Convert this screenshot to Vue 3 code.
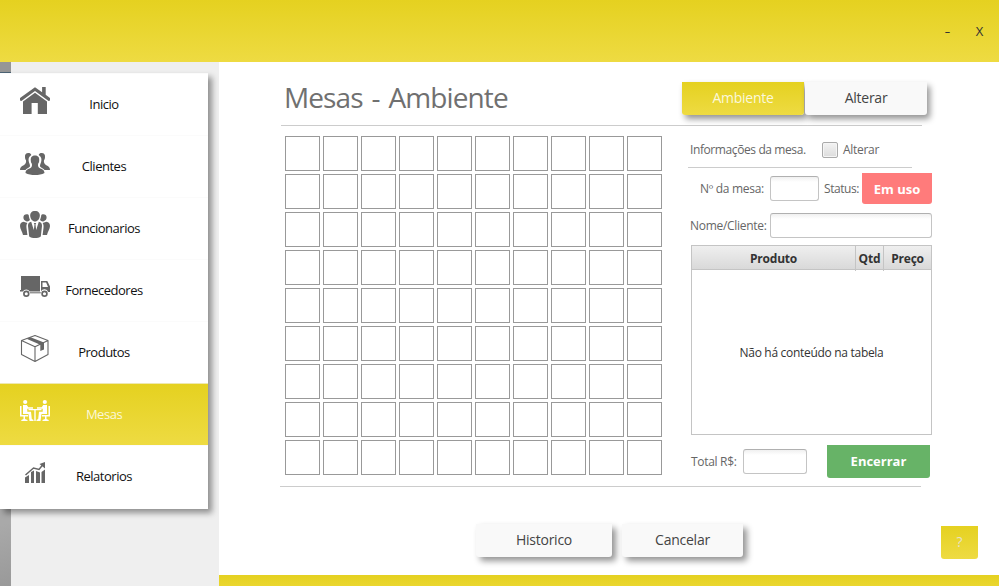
<script setup>
import { ref } from 'vue'

const active = ref('mesas')
const menu = [
  { id: 'inicio', label: 'Inicio' },
  { id: 'clientes', label: 'Clientes' },
  { id: 'funcionarios', label: 'Funcionarios' },
  { id: 'fornecedores', label: 'Fornecedores' },
  { id: 'produtos', label: 'Produtos' },
  { id: 'mesas', label: 'Mesas' },
  { id: 'relatorios', label: 'Relatorios' },
]
const tables = 90
</script>

<template>
  <div class="window">
    <header class="titlebar">
      <span class="win-btn minimize">-</span>
      <span class="win-btn close">X</span>
    </header>
    <div class="body">
      <aside class="sidebar">
        <div class="strip strip-top"></div>
        <nav class="menu">
          <a v-for="item in menu" :key="item.id" class="item" :class="{ active: active === item.id }" @click="active = item.id">
            <svg class="icon" viewBox="0 0 30 30" width="30" height="30">
              <g v-if="item.id === 'inicio'" fill="currentColor">
                <path d="M15 1.2 0 12v2.4l1.4.6L15 5l13.600 10 1.400-.6V12l-4.300-3.200V1h-3.600v5.200z" />
                <path d="M15 6.800 3 15.500V28h8.600V17h6.200v11H27V15.500z" />
              </g>
              <g v-else-if="item.id === 'clientes'" fill="currentColor">
                <path d="M8.500 5C5.600 5 4.800 6.800 5 9c.1 1.500.2 2.300 1 3.200.4 2-.3 3.800-2.300 5C1.500 18 0 19.500 0 22h5.500c1-1.500 3.300-2 4.300-3.200.7-1.300-.4-3-.9-4.800-.8-3-.3-5.200 2.400-7C10.800 5.600 9.800 5 8.500 5z" />
                <path d="M21.500 5c2.900 0 3.700 1.800 3.500 4-.1 1.500-.2 2.300-1 3.200-.4 2 .3 3.800 2.300 5 2.200.8 3.700 2.300 3.700 4.800h-5.500c-1-1.500-3.300-2-4.300-3.200-.7-1.300.4-3 .9-4.800.8-3 .3-5.200-2.400-7 .5-1.400 1.500-2 2.800-2z" />
                <path d="M15 7.500c-3.600 0-4.500 2.500-4.200 5 .1 1.500.2 2.400 1.100 3.300.3 2.100 0 3.300-1.400 4.300C8 21.200 5.600 22 5.500 25c5 2.700 14 2.700 19 0-.1-3-2.500-3.800-5-4.900-1.400-1-1.700-2.200-1.400-4.300.9-.9 1-1.800 1.100-3.300.3-2.500-.6-5-4.200-5z" />
              </g>
              <g v-else-if="item.id === 'funcionarios'" fill="currentColor">
                <path d="M15 1c3.400 0 5.100 2.100 4.800 5-.4 3.200-2.300 5.500-4.800 5.500S10.600 9.200 10.200 6C9.900 3.100 11.600 1 15 1z" />
                <path d="M6.700 4.200c1.400 0 1.600.2 2 .9.200 2.300.8 3.700 1.300 4.900-1 1.200-2.400 1.700-3.700 1.200-2-.7-3-2.300-2.900-4 .1-1.900 1.300-3 3.300-3z" />
                <path d="M23.300 4.200c-1.400 0-1.600.2-2 .9-.2 2.300-.8 3.700-1.300 4.900 1 1.200 2.400 1.700 3.700 1.200 2-.7 3-2.300 2.900-4-.1-1.900-1.300-3-3.300-3z" />
                <path d="M11.200 11.800 13.800 20l.7-5.600-.7-1.400h2.400l-.7 1.400.7 5.600 2.600-8.200c2.100.5 3.300 1.700 3.200 4.200l-1.200 10.500c-3 2-8.600 2-11.600 0L8 16c-.1-2.500 1.100-3.700 3.200-4.200z" />
                <path d="M3.500 11.800 7.400 13c-1 1.400-1.100 3-.9 5l.9 7H3c-.5-3.200-3-6-3-9 0-2.500 1.400-3.800 3.500-4.200z" />
                <path d="M26.500 11.800 22.600 13c1 1.400 1.100 3 .9 5l-.9 7H27c.5-3.200 3-6 3-9 0-2.500-1.400-3.800-3.500-4.200z" />
              </g>
              <g v-else-if="item.id === 'fornecedores'" fill="currentColor">
                <path d="M1 4h19v15.500H9.700a4 4 0 0 0-6.900 0H0V18h1z" />
                <path fill-rule="evenodd" d="M21 9h6.300L30 14.500V20h-1.800a4 4 0 0 0-7.200-.7zm1.500 1.500V15H28l-1.900-4.500z" />
                <circle cx="6.300" cy="21.700" r="2.400" fill="none" stroke="currentColor" stroke-width="1.700" />
                <circle cx="24.500" cy="21.700" r="2.400" fill="none" stroke="currentColor" stroke-width="1.700" />
                <path d="M10 20.300h10.800v1H10z" />
              </g>
              <g v-else-if="item.id === 'produtos'" fill="none" stroke="currentColor" stroke-width="1.100" stroke-linejoin="round">
                <path d="M15 1.500 28 6.500v14L15 27.500 1.500 20.500v-14zM1.500 6.500 15 12.800l13-6.300M15 12.800v14.700" />
                <path d="m6.500 4.800 4-1.500L24 8.500V15.500L20.300 17v-6.300z" fill="currentColor" stroke="none" />
              </g>
              <g v-else-if="item.id === 'mesas'" fill="currentColor">
                <circle cx="5.200" cy="6" r="2.100" />
                <circle cx="24.800" cy="6" r="2.100" />
                <path d="M0 10h1.500v9H8v1.500H5V23l2.500 1v1H1.300v-1l2.200-1v-2.500H0z" />
                <path d="M30 10h-1.500v9H22v1.500h3V23l-2.500 1v1h6.200v-1l-2.200-1v-2.500H30z" />
                <path d="M3 9h3.800l1.500 2.300H13v1.500H7.300v3H11l.8 7.200 1.700 1v1h-4l-1-7H3z" />
                <path d="M27 9h-3.800l-1.500 2.300H17v1.500h5.700v3H19l-.8 7.200-1.700 1v1h4l1-7H27z" />
                <path d="M8.500 13h13v1.200h-5.800V25h-1.400V14.200H8.500z" />
              </g>
              <g v-else fill="currentColor">
                <path d="M5 19.500 9 17v8H5zM11 14l3-1.500V25h-3zM16 13l4 1.500V25h-4zM21.500 14l3.500-2.500V25h-3.500z" />
                <path d="m5.500 17 8-7 5.500 1.500 4-5" fill="none" stroke="currentColor" stroke-width="1.500" />
                <path d="M25 4v6.500L19.500 6z" />
              </g>
            </svg>
            <span class="label">{{ item.label }}</span>
          </a>
        </nav>
        <div class="strip strip-bottom"></div>
      </aside>

      <main class="main">
        <section class="content">
          <div class="heading">
            <h1>Mesas - Ambiente</h1>
            <div class="tabs">
              <button class="btn yellow">Ambiente</button>
              <button class="btn raised">Alterar</button>
            </div>
          </div>
          <div class="columns">
            <div class="grid">
              <div v-for="n in tables" :key="n" class="cell"></div>
            </div>
            <div class="info">
              <div class="row head">
                <span class="t informacoes">Informações da mesa.</span>
                <i class="check"></i>
                <span class="t">Alterar</span>
              </div>
              <div class="row number">
                <span class="t">Nº da mesa:</span>
                <i class="field f-num"></i>
                <span class="t status">Status:</span>
                <button class="btn solid red">Em uso</button>
              </div>
              <div class="row client">
                <span class="t nome">Nome/Cliente:</span>
                <i class="field f-client"></i>
              </div>
              <div class="table">
                <div class="thead">
                  <span>Produto</span><span>Qtd</span><span>Preço</span>
                </div>
                <div class="empty">Não há conteúdo na tabela</div>
              </div>
              <div class="row total">
                <span class="t">Total R$:</span>
                <i class="field f-total"></i>
                <button class="btn solid green">Encerrar</button>
              </div>
            </div>
          </div>
          <div class="actions">
            <button class="btn raised hist">Historico</button>
            <button class="btn raised canc">Cancelar</button>
            <button class="btn yellow help">?</button>
          </div>
        </section>
        <footer class="footer"></footer>
      </main>
    </div>
  </div>
</template>

<style>
body { margin: 0; overflow: hidden; }
</style>

<style scoped>
* { box-sizing: border-box; }
.window {
  width: 999px; height: 586px; display: flex; flex-direction: column;
  background: #fff; overflow: hidden;
  font-family: "Open Sans", "Noto Sans", sans-serif; font-size: 12px; color: #666;
}
.titlebar {
  height: 62px; flex: none; display: flex; justify-content: flex-end; align-items: center;
  gap: 24px; padding: 0 15px 0 0; background: linear-gradient(#e5d120, #eedb42);
  color: #333; font-size: 13px;
}
.minimize { width: 7px; text-align: center; transform: scaleX(1.4); }
.close { width: 9px; text-align: center; }
.body { flex: 1; display: flex; min-height: 0; }
.sidebar { width: 219px; flex: none; background: #efefef; display: flex; flex-direction: column; }
.strip { width: 11px; }
.strip-top { height: 11px; flex: none; background: #969696; border-bottom: 1px solid #4b6375; }
.strip-bottom { flex: 1; background: linear-gradient(165deg, #a9a9a9 20%, #999); }
.menu {
  position: relative; width: 208px; height: 436px; flex: none; background: #fff;
  box-shadow: 4px 4px 6px rgba(0, 0, 0, .4);
}
.item {
  height: 62px; display: flex; align-items: center; padding-left: 20px;
  border-top: 1px solid #fbfbfb; color: #666; cursor: pointer;
}
.icon { flex: none; margin-top: -7px; display: block; }
.label { width: 108px; padding-bottom: 2px; text-align: center; font-size: 13px; letter-spacing: -.48px; color: #111; }
.item.active { background: linear-gradient(#e5d120, #eedb42); border-top-color: #eee8b0; color: #fff; }
.item.active .label { color: #fbf7d8; }

.main { flex: 1; display: flex; flex-direction: column; min-width: 0; }
.footer { height: 11px; flex: none; background: linear-gradient(#e5d120, #ead62f); }
.content { flex: 1; padding-left: 61px; display: flex; flex-direction: column; min-height: 0; }
.heading {
  width: 641px; height: 64px; flex: none; display: flex; align-items: flex-start;
  border-bottom: 1px solid #ccc; padding: 20px 0 0 3px; margin-left: 1px;
}
h1 { margin: -4px 0 0; width: 398px; flex: none; font-weight: 400; font-size: 28px; line-height: 38px; letter-spacing: -.9px; word-spacing: 2.5px; color: #707070; }
.tabs { display: flex; flex: none; }
.btn {
  font-family: inherit; border: 0; padding: 0 0 2px; margin: 0; flex: none; height: 33px;
  border-radius: 0 0 3px 3px; font-size: 14px; letter-spacing: -.25px; text-align: center;
}
.yellow { background: linear-gradient(#e5d120, #eedb42); color: #fbf8dc; }
.tabs .btn { width: 122px; box-shadow: 3px 4px 6px rgba(0, 0, 0, .42); }
.tabs .yellow { margin-right: 1px; }
.raised { background: #f9f9f9; color: #444; box-shadow: 4px 4px 6px rgba(0, 0, 0, .42); }
.columns { width: 652px; height: 361px; flex: none; display: flex; padding: 10px 0 0 5px; position: relative; }
.columns::after { content: ""; position: absolute; left: 0; bottom: 0; width: 641px; height: 1px; background: #ccc; }
.grid { display: grid; grid-template-columns: repeat(10, 35px); grid-auto-rows: 35px; gap: 3px; width: 377px; flex: none; align-content: start; }
.cell { border: 1px solid #999; background: #fff; }
.info { margin-left: 26px; width: 244px; flex: none; }
.row { display: flex; align-items: center; }
.t { white-space: nowrap; flex: none; letter-spacing: -.3px; }
.head { height: 32px; width: 224px; border-bottom: 1px solid #ccc; padding: 0 0 4px 2px; }
.informacoes { width: 132px; letter-spacing: -.4px; }
.check {
  width: 16px; height: 16px; border: 1px solid #aaa; border-radius: 2px; margin-right: 5px;
  background: linear-gradient(#f3f3f3, #dcdcdc); box-shadow: inset 0 0 0 1px #f5f5f5;
}
.number { height: 33px; margin-top: 4px; padding-left: 12px; }
.number > .t:first-child { width: 70px; }
.field {
  height: 25px; border: 1px solid #c4c4c4; border-top-color: #b0b0b0; border-radius: 3px; flex: none;
  background: linear-gradient(#f0f0f0, #fff 5px);
}
.f-num { width: 49px; }
.number .status { width: 38px; margin-left: 5px; letter-spacing: -.45px; }
.solid { font-weight: 700; font-size: 13px; color: #fff; letter-spacing: 0; }
.red { width: 70px; height: 31px; padding-bottom: 0; background: #ff7b7b; }
.client { height: 25px; margin-top: 8px; padding-left: 2px; }
.nome { width: 80px; }
.f-client { width: 162px; }
.table { width: 241px; height: 190px; margin: 7px 0 0 3px; border: 1px solid #c4c4c4; }
.thead {
  height: 24px; display: grid; grid-template-columns: 163px 28px 48px; text-align: center;
  background: linear-gradient(#efefef, #d9d9d9); border-bottom: 1px solid #c4c4c4;
  font-weight: 700; font-size: 12px; line-height: 25px; color: #333; letter-spacing: -.2px;
}
.thead span + span { border-left: 1px solid #c4c4c4; }
.empty { height: 164px; display: flex; align-items: center; justify-content: center; color: #333; letter-spacing: -.3px; }
.total { height: 33px; margin-top: 10px; padding-left: 3px; }
.total > .t { width: 52px; }
.f-total { width: 64px; }
.green { width: 103px; margin-left: 20px; background: #67b367; }
.actions { display: flex; align-items: flex-start; padding: 37px 0 0 196px; }
.actions .raised { padding-bottom: 3px; }
.hist { width: 136px; margin-right: 10px; }
.canc { width: 121px; }
.help { width: 37px; margin: 2px 0 0 198px; color: #e6e2cc; }
</style>
